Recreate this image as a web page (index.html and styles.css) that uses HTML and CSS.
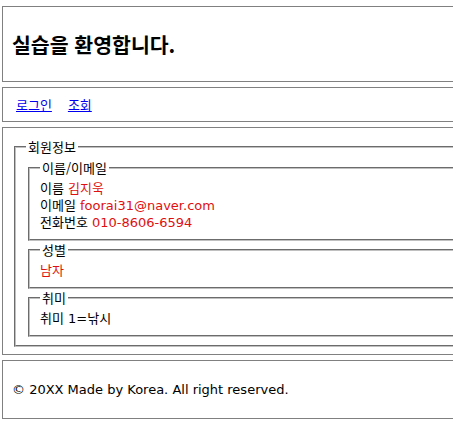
FILE: index.html
```html
<!DOCTYPE html>
<html lang="ko">
<head>
<meta charset="utf-8">
<title>실습</title>
<link rel="stylesheet" href="styles.css">
</head>
<body>
<div class="page">
  <header class="box header">
    <h1 class="title">실습을 환영합니다.</h1>
  </header>
  <nav class="box nav">
    <a href="#" class="link">로그인</a>
    <a href="#" class="link">조회</a>
  </nav>
  <section class="box main">
    <fieldset class="group outer">
      <legend class="legend">회원정보</legend>
      <fieldset class="group">
        <legend class="legend">이름/이메일</legend>
        <div class="line">이름 <span class="val">김지욱</span></div>
        <div class="line">이메일 <span class="val">foorai31@naver.com</span></div>
        <div class="line">전화번호 <span class="val">010-8606-6594</span></div>
      </fieldset>
      <fieldset class="group">
        <legend class="legend">성별</legend>
        <div class="line"><span class="val">남자</span></div>
      </fieldset>
      <fieldset class="group">
        <legend class="legend">취미</legend>
        <div class="line">취미 1=낚시</div>
      </fieldset>
    </fieldset>
  </section>
  <footer class="box footer">
    <p class="copy">© 20XX Made by Korea. All right reserved.</p>
  </footer>
</div>
</body>
</html>
```

FILE: styles.css
```css
html, body {
  margin: 0;
  padding: 0;
  overflow: hidden;
  background: #fff;
}
body {
  font-family: "DejaVu Sans", "Noto Sans CJK KR", sans-serif;
  font-size: 13px;
  color: #000;
}
.page {
  width: 700px;
  padding: 6px 0 0 2px;
  display: flex;
  flex-direction: column;
  gap: 5px;
}
.box {
  border: 1px solid #808080;
}
.header {
  height: 74px;
  display: flex;
  align-items: center;
  padding: 0 9px;
}
.title {
  margin: 0;
  font-size: 20.5px;
  font-weight: bold;
  font-family: "Noto Sans CJK KR", sans-serif;
  line-height: 24px;
}
.nav {
  height: 33px;
  display: flex;
  align-items: center;
  gap: 16px;
  padding: 0 13px;
}
.link {
  color: #0000ee;
  text-decoration: underline;
  font-family: "Noto Sans CJK KR", sans-serif;
  font-size: 13px;
}
.main {
  padding: 10px 9px 7px 9px;
}
.group {
  margin: 0 2px;
  padding: 4px 10px 8px 10px;
  border: 2px groove #c0c0c0;
  line-height: 17px;
}
.outer {
  padding-bottom: 8px;
}
.legend {
  padding: 0 2px;
  font-family: "Noto Sans CJK KR", sans-serif;
  line-height: 17px;
}
.line {
  line-height: 17px;
}
.val {
  color: #e01010;
}
.footer {
  height: 57px;
  display: flex;
  align-items: center;
  padding: 0 9px;
}
.copy {
  margin: 0;
}
```
